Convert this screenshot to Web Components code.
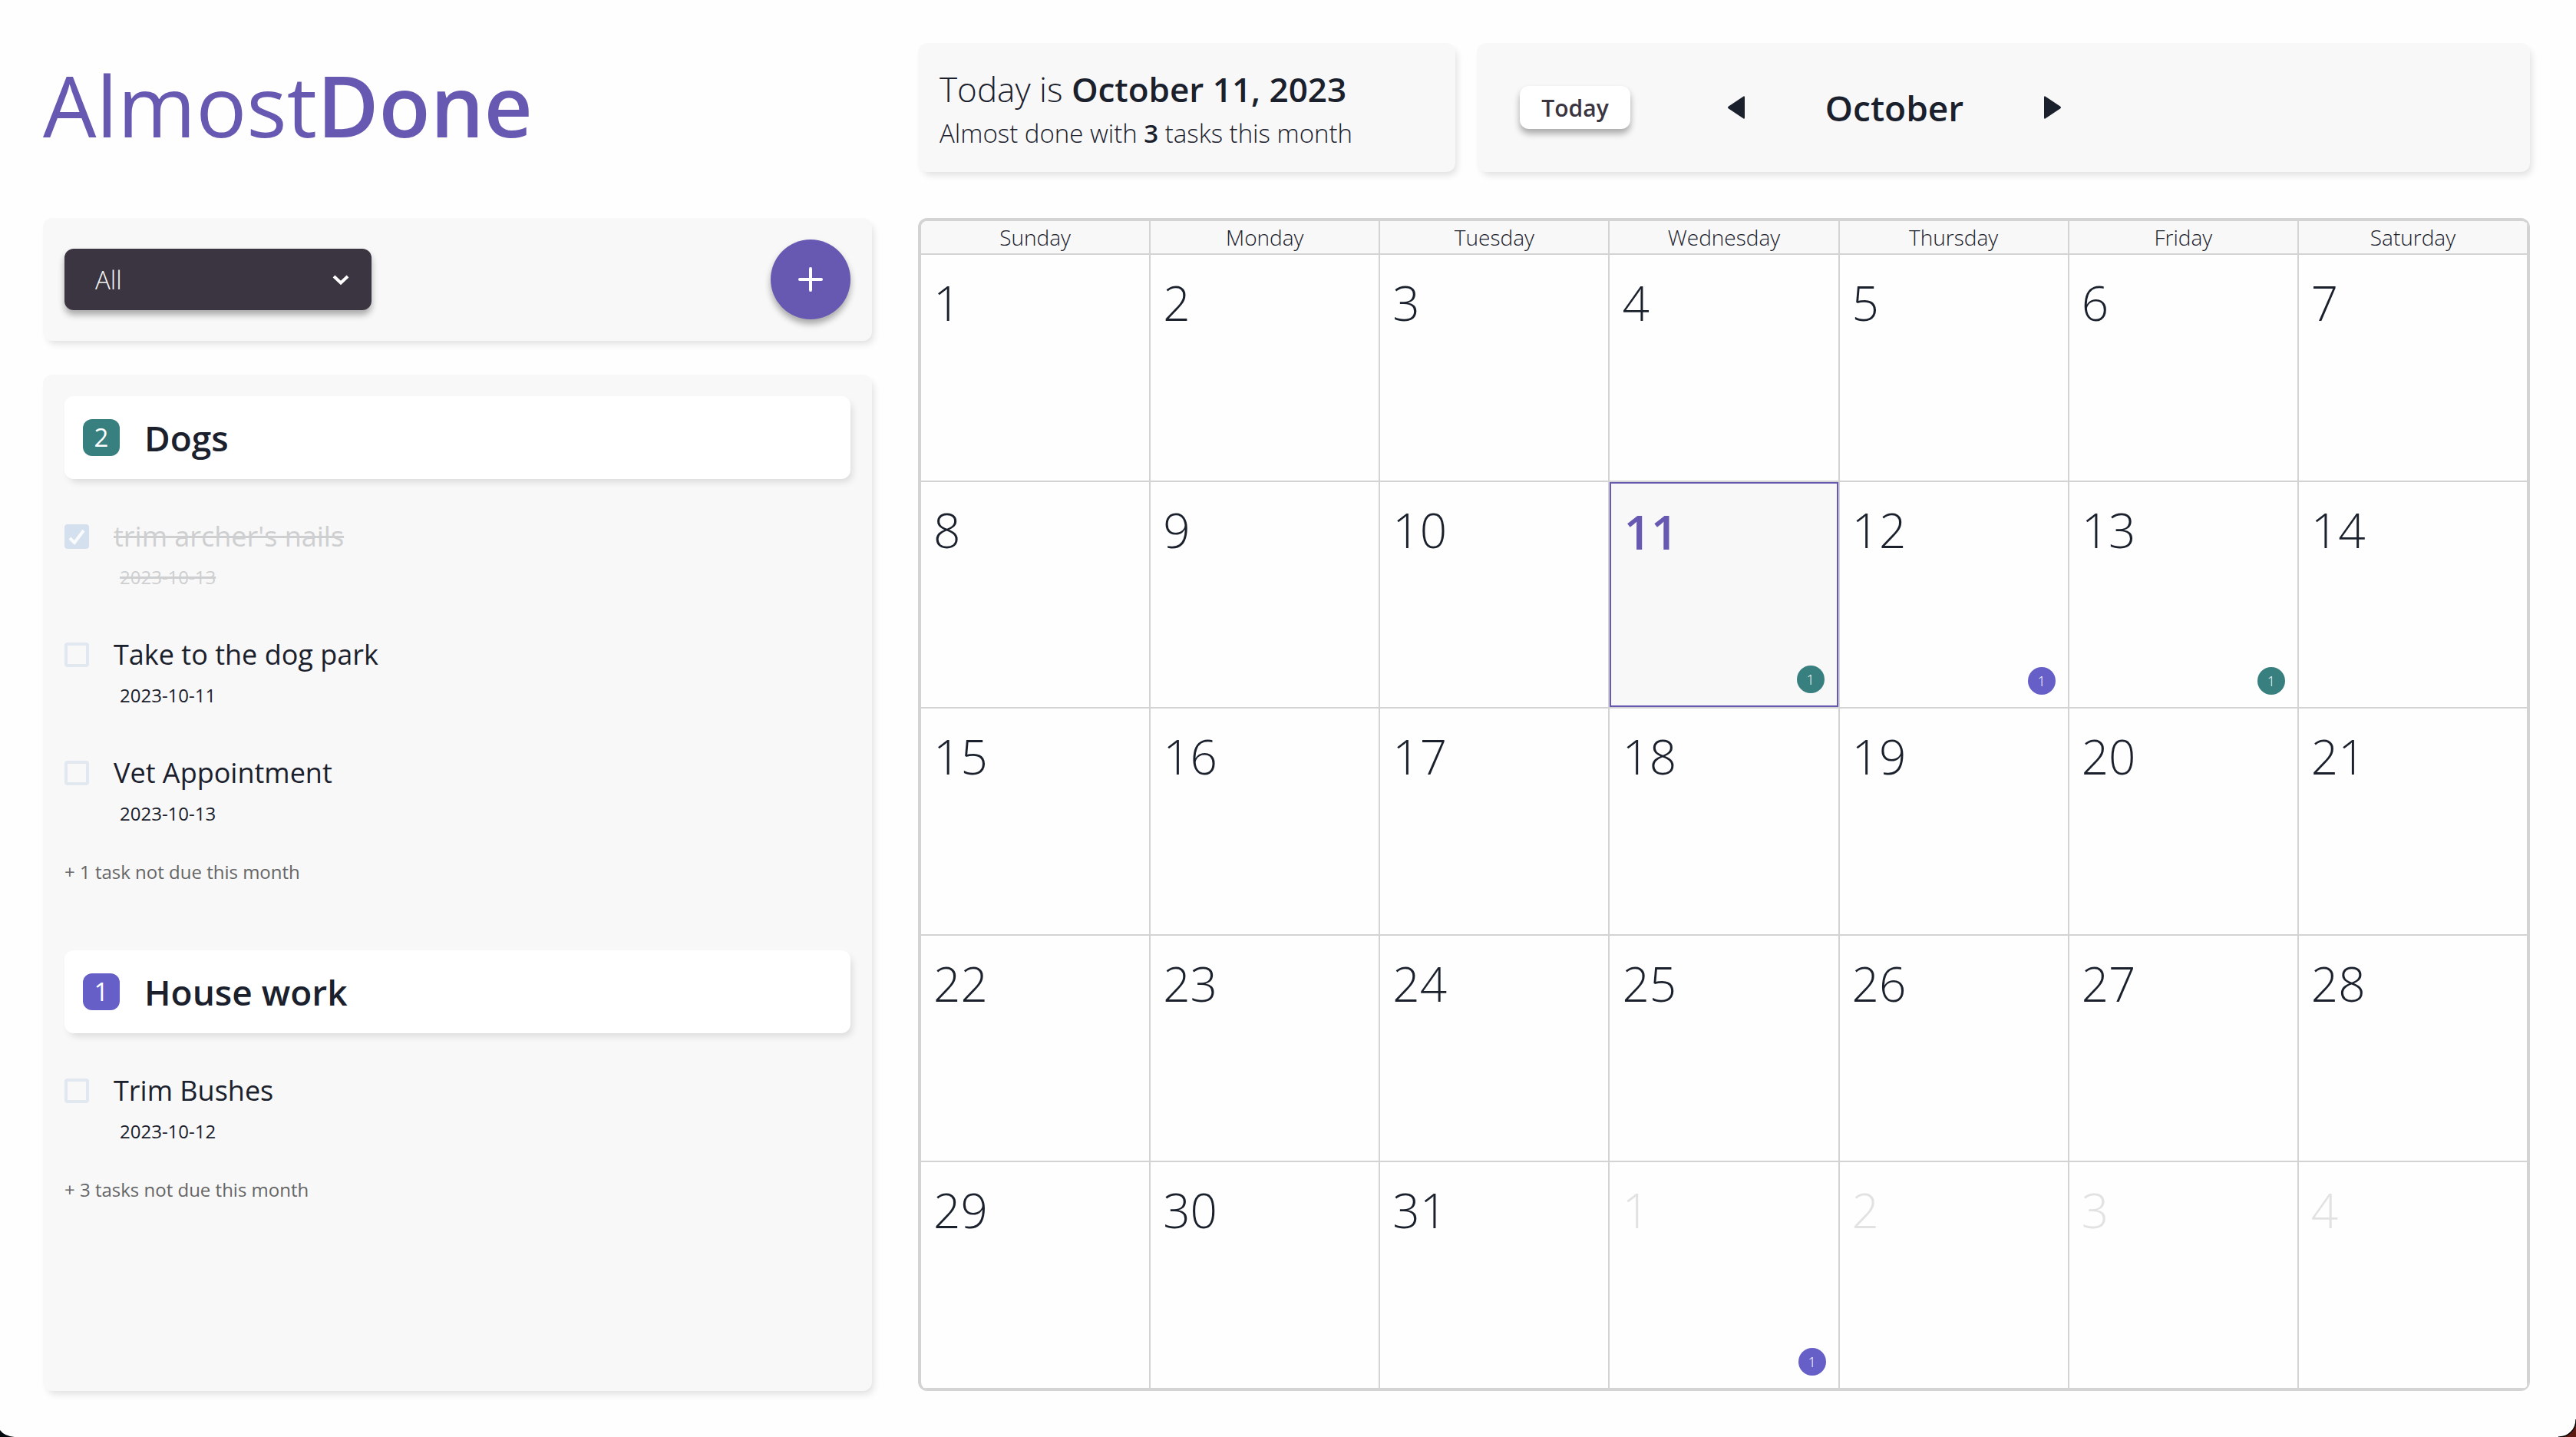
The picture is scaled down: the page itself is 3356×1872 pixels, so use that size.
<!DOCTYPE html>
<html lang="en">
<head>
<meta charset="utf-8">
<title>AlmostDone</title>
<style>
  :root {
    --ink: #1a202c;
    --purple: #6759b2;
    --violet: #665fc7;
    --teal: #387f80;
    --dark: #3a3540;
    --panel: #f8f8f8;
    --line: #d3d3d3;
    --soft-shadow: 4px 6px 10px -2px rgba(0, 0, 0, .12);
    --lift-shadow: 0 6px 8px rgba(0, 0, 0, .32);
    --radius: 12px;
  }
  body {
    margin: 0;
    background: #fefefe;
    color: var(--ink);
    font-family: "Open Sans", "Noto Sans", sans-serif;
    font-weight: 300;
  }
</style>
</head>
<body>
<planner-app></planner-app>

<script>
const define = (name, css, html, ready) => {
  const template = document.createElement('template');
  template.innerHTML = `<style>*{box-sizing:border-box}${css}</style>${html}`;
  customElements.define(name, class extends HTMLElement {
    connectedCallback() {
      if (this.shadowRoot) return;
      this.attachShadow({ mode: 'open' }).append(template.content.cloneNode(true));
      if (ready) ready(this, this.shadowRoot);
    }
  });
};

define('app-logo', `
  :host { display: flex; align-items: center; padding-bottom: 8px; }
  h1 { margin: 0; color: var(--purple); font-size: 110px; line-height: 120px; font-weight: 400; white-space: nowrap; }
  b { font-weight: 600; }
`, `<h1>Almost<b>Done</b></h1>`);

define('soft-card', `
  :host { display: block; background: var(--panel); border-radius: var(--radius); box-shadow: var(--soft-shadow); }
`, `<slot></slot>`);

define('today-summary', `
  :host { display: flex; flex-direction: column; justify-content: center; height: 100%; padding: 4px 28px 0; box-sizing: border-box; white-space: nowrap; }
  p { margin: 0; }
  .date { font-size: 44px; line-height: 64px; }
  .count { font-size: 33px; line-height: 52px; }
  b { font-weight: 600; }
`, `
  <p class="date">Today is <b>October 11, 2023</b></p>
  <p class="count">Almost done with <b>3</b> tasks this month</p>
`);

define('month-nav', `
  :host { display: flex; align-items: center; height: 100%; padding: 0 56px; box-sizing: border-box; }
  button { font: inherit; border: 0; padding: 0; color: inherit; cursor: pointer; }
  .today { width: 144px; height: 56px; margin-right: 106px; border-radius: 12px; background: #fff; color: var(--dark);
    font-size: 30px; font-weight: 600; box-shadow: var(--lift-shadow); }
  .step { width: 64px; height: 64px; background: none; display: flex; align-items: center; justify-content: center; }
  h2 { margin: 0; width: 348px; text-align: center; font-size: 46px; line-height: 64px; font-weight: 600; }
  svg { display: block; fill: currentColor; }
`, `
  <button class="today" type="button">Today</button>
  <button class="step" type="button" aria-label="Previous month">
    <svg width="24" height="32" viewBox="0 0 24 32"><path d="M21.500 1.500 Q23 .5 23 3 V29 Q23 31.500 21.500 30.500 L2 17.500 Q0 16 2 14.500 Z"/></svg>
  </button>
  <h2>October</h2>
  <button class="step" type="button" aria-label="Next month">
    <svg width="24" height="32" viewBox="0 0 24 32"><path d="M2.500 1.500 Q1 .5 1 3 V29 Q1 31.500 2.500 30.500 L22 17.500 Q24 16 22 14.500 Z"/></svg>
  </button>
`);

define('task-toolbar', `
  :host { display: flex; align-items: center; justify-content: space-between; padding: 28px; }
  .pick { display: grid; align-items: center; width: 400px; }
  .pick > * { grid-area: 1 / 1; }
  select { appearance: none; width: 100%; height: 80px; padding: 0 40px; border: 0; border-radius: 12px; background: var(--dark);
    color: #f8f8f8; font: inherit; font-size: 33px; box-shadow: var(--lift-shadow); }
  .pick svg { justify-self: end; margin-right: 24px; pointer-events: none; z-index: 1; }
  button { display: flex; align-items: center; justify-content: center; width: 104px; height: 104px; padding: 0; border: 0; border-radius: 50%;
    background: var(--purple); box-shadow: var(--lift-shadow); }
  svg { display: block; fill: none; stroke: #fff; }
`, `
  <div class="pick">
    <select aria-label="Category"><option>All</option><option>Dogs</option><option>House work</option></select>
    <svg width="32" height="32" viewBox="0 0 32 32" stroke-width="4"><path d="M7 12 L16 20.500 L25 12"/></svg>
  </div>
  <button type="button" aria-label="Add task">
    <svg width="36" height="36" viewBox="0 0 36 36" stroke-width="4" stroke-linecap="round"><path d="M18 4 V32 M4 18 H32"/></svg>
  </button>
`);

define('task-group', `
  :host { display: block; --tone: var(--teal); }
  :host([tone="violet"]) { --tone: var(--violet); }
  header { display: flex; align-items: center; gap: 32px; height: 108px; padding: 0 24px; background: #fff;
    border-radius: var(--radius); box-shadow: var(--soft-shadow); }
  .badge { width: 48px; border-radius: 12px; background: var(--tone); color: #fff; font-size: 33px; line-height: 48px; font-weight: 400; text-align: center; }
  h2 { margin: 0; font-size: 46px; line-height: 64px; font-weight: 600; }
  .tasks { display: flex; flex-direction: column; gap: 56px; padding: 48px 0 40px; }
  .more { margin: 0; color: #666; font-size: 24px; line-height: 36px; font-weight: 400; }
`, `
  <header><span class="badge"></span><h2></h2></header>
  <div class="tasks"><slot></slot></div>
  <p class="more"></p>
`, (host, root) => {
  root.querySelector('.badge').textContent = host.getAttribute('count');
  root.querySelector('h2').textContent = host.getAttribute('name');
  root.querySelector('.more').textContent = host.getAttribute('more');
});

define('task-item', `
  :host { display: flex; flex-direction: column; gap: 8px; font-weight: 400; }
  label { display: flex; align-items: center; gap: 32px; font-size: 36px; line-height: 54px; }
  .box { display: grid; width: 32px; height: 32px; }
  .box > * { grid-area: 1 / 1; }
  input { appearance: none; margin: 0; width: 32px; height: 32px; border: 4px solid #e2e8f0; border-radius: 4px; }
  svg { display: none; z-index: 1; fill: none; stroke: #fafbfc; stroke-width: 4; pointer-events: none; }
  time { padding-left: 72px; font-size: 24px; line-height: 36px; }
  :host([done]) { color: #cecfd0; }
  :host([done]) input { border-color: #d5e0ee; background: #d5e0ee; }
  :host([done]) svg { display: block; }
  :host([done]) .name, :host([done]) .due { text-decoration: line-through; text-decoration-thickness: 3px; }
`, `
  <label><span class="box"><input type="checkbox"><svg width="32" height="32" viewBox="0 0 32 32"><path d="M7 18 L13 24 L25 8"/></svg></span><span class="name"><slot></slot></span></label>
  <time><span class="due"></span></time>
`, (host, root) => {
  root.querySelector('input').checked = host.hasAttribute('done');
  root.querySelector('.due').textContent = host.getAttribute('due');
});

define('task-dot', `
  :host { display: block; width: 36px; border-radius: 50%; background: var(--teal); color: #fff; font-size: 18px; line-height: 36px; font-weight: 300; text-align: center; }
  :host([tone="violet"]) { background: var(--violet); }
`, `<slot></slot>`);

define('month-calendar', `
  :host { display: flex; border: solid var(--line); border-width: 4px 2px 2px 4px; border-radius: var(--radius); overflow: hidden; }
  thead { display: block; }
  table { flex: 1; display: flex; flex-direction: column; }
  tbody { flex: 1; display: grid; grid-auto-rows: 1fr; }
  tr { display: grid; grid-template-columns: repeat(7, minmax(0, 1fr)); }
  th, td { padding: 0; border: solid var(--line); border-width: 0 2px 2px 0; }
  th { height: 44px; background: var(--panel); font-size: 28px; line-height: 42px; font-weight: 300; text-align: center; }
  td { display: flex; }
  .day { flex: 1; display: flex; flex-direction: column; align-items: flex-start; justify-content: space-between; padding: 16px; font-size: 62px; line-height: 92px; }
  .other { color: #e2e2e2; }
  .now { border: 2px solid var(--purple); background: var(--panel); color: var(--purple); font-weight: 600; }
  task-dot { align-self: flex-end; }
`, `
  <table><thead><tr></tr></thead><tbody></tbody></table>
`, (host, root) => {
  const names = ['Sunday', 'Monday', 'Tuesday', 'Wednesday', 'Thursday', 'Friday', 'Saturday'];
  const daysInMonth = 31;
  const today = 11;
  // Keyed by position in the grid: 32 and up belong to the next month.
  const dots = { 11: 'teal', 12: 'violet', 13: 'teal', 32: 'violet' };
  root.querySelector('thead tr').innerHTML = names.map(n => `<th scope="col">${n}</th>`).join('');
  let rows = '';
  for (let week = 0; week < 5; week++) {
    rows += '<tr>';
    for (let col = 1; col <= 7; col++) {
      const day = week * 7 + col;
      const number = day > daysInMonth ? day - daysInMonth : day;
      const cls = 'day' + (day > daysInMonth ? ' other' : '') + (day === today ? ' now' : '');
      const dot = dots[day] ? `<task-dot tone="${dots[day]}">1</task-dot>` : '';
      rows += `<td><div class="${cls}"><span>${number}</span>${dot}</div></td>`;
    }
    rows += '</tr>';
  }
  root.querySelector('tbody').innerHTML = rows;
});

define('window-corner', `
  :host { position: fixed; bottom: 0; right: 0; pointer-events: none; }
  :host([side="left"]) { right: auto; left: 0; }
  svg { display: block; }
  .left { display: none; }
  :host([side="left"]) .left { display: block; }
  :host([side="left"]) .right { display: none; }
`, `
  <svg class="right" width="24" height="24" viewBox="0 0 24 24"><path d="M24 1 A22 22 0 0 1 1 24 H24 Z" fill="#5c1a10"/><path d="M24 1 A22 22 0 0 1 1 24" fill="none" stroke="#000" stroke-width="1.500"/></svg>
  <svg class="left" width="20" height="10" viewBox="0 0 20 10"><path d="M0 1 Q6 9 19 10 H0 Z" fill="#04090f"/></svg>
`);

define('planner-app', `
  :host { display: grid; grid-template-columns: minmax(0, 18fr) minmax(0, 35fr); grid-template-rows: 168px 1fr; gap: 60px;
    min-height: 100vh; padding: 56px 60px 60px 56px; box-sizing: border-box; }
  .top { display: grid; grid-template-columns: calc(100% / 3) minmax(0, 1fr); gap: 28px; }
  aside { display: flex; flex-direction: column; gap: 44px; }
  .list { flex: 1; padding: 28px; display: flex; flex-direction: column; gap: 84px; }
`, `
  <app-logo></app-logo>
  <div class="top">
    <soft-card><today-summary></today-summary></soft-card>
    <soft-card><month-nav></month-nav></soft-card>
  </div>
  <aside>
    <soft-card><task-toolbar></task-toolbar></soft-card>
    <soft-card class="list">
      <task-group name="Dogs" count="2" more="+ 1 task not due this month">
        <task-item due="2023-10-13" done>trim archer's nails</task-item>
        <task-item due="2023-10-11">Take to the dog park</task-item>
        <task-item due="2023-10-13">Vet Appointment</task-item>
      </task-group>
      <task-group name="House work" count="1" tone="violet" more="+ 3 tasks not due this month">
        <task-item due="2023-10-12">Trim Bushes</task-item>
      </task-group>
    </soft-card>
  </aside>
  <month-calendar></month-calendar>
  <window-corner side="left"></window-corner>
  <window-corner side="right"></window-corner>
`);
</script>
</body>
</html>
